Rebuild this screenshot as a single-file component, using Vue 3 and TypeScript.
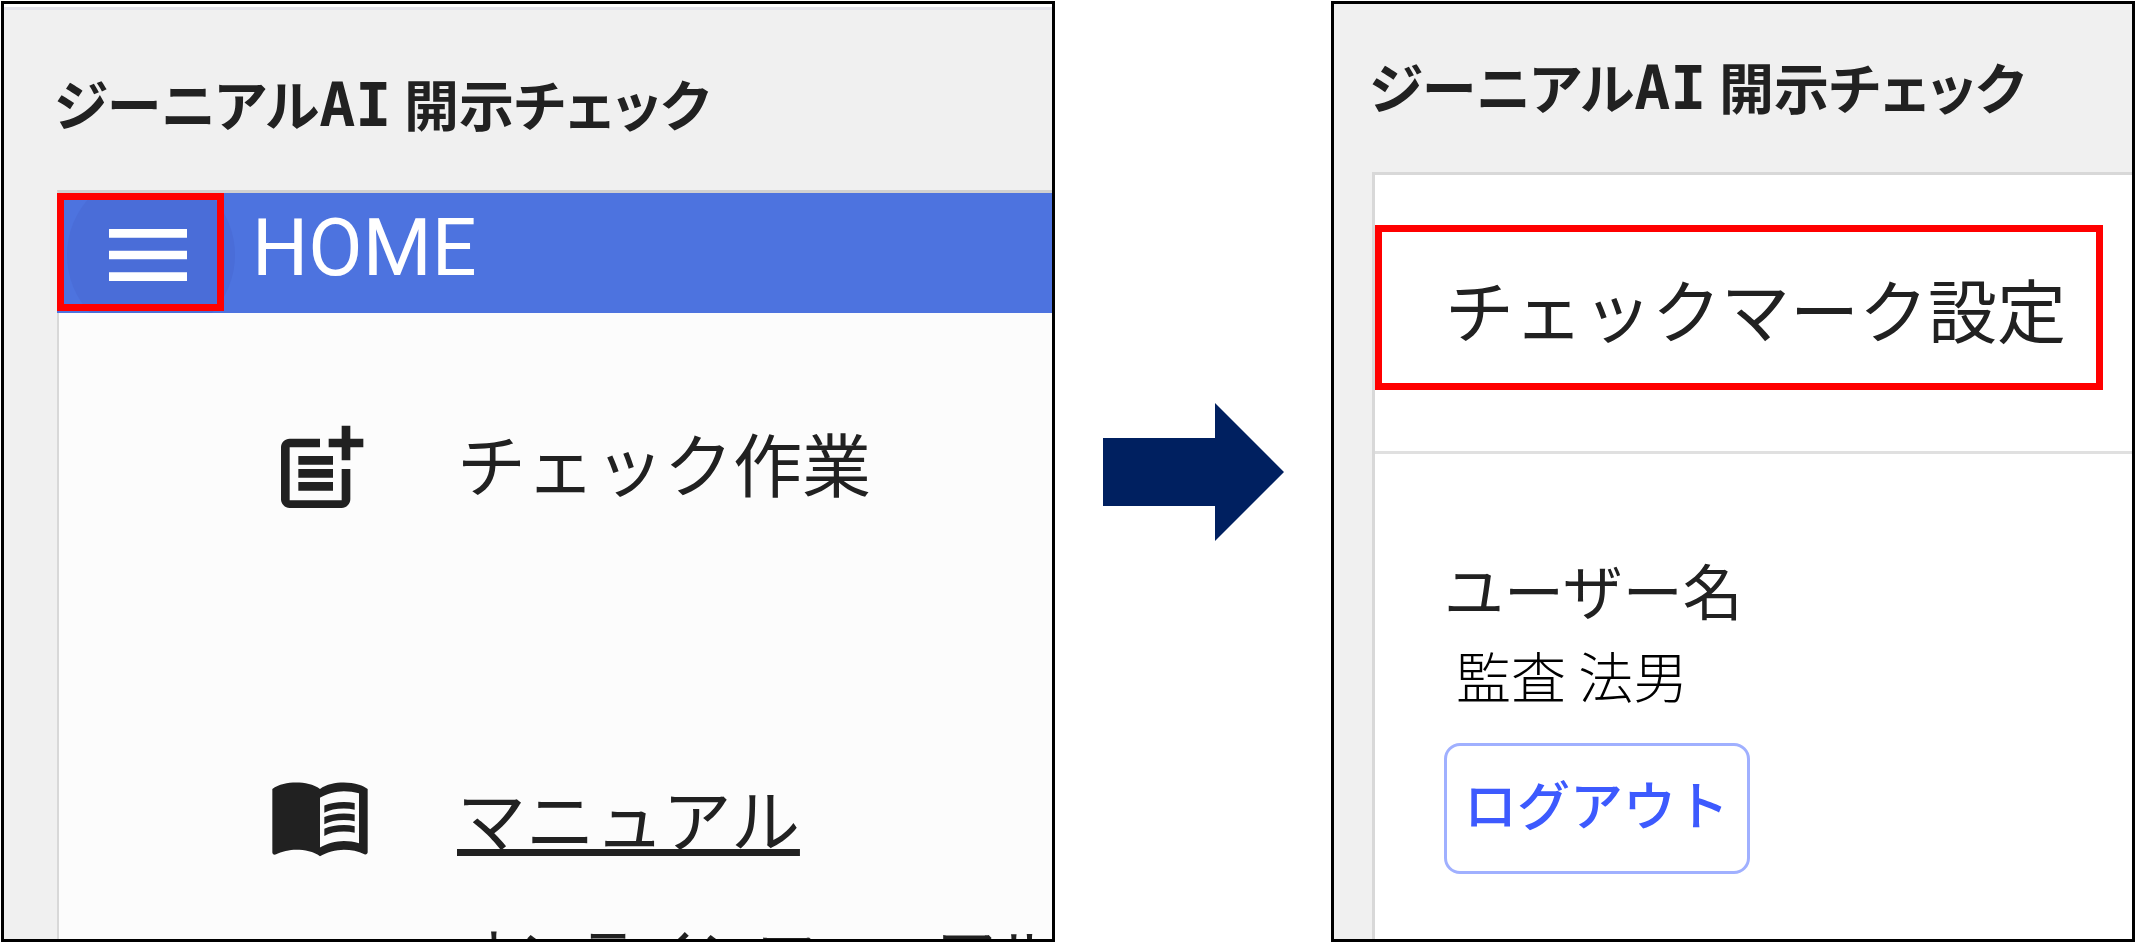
<script setup lang="ts">
const title = { brand: 'ジーニアル', ai: 'AI', product: ' 開示チェック' }
const user = { label: 'ユーザー名', name: '監査 法男' }
</script>

<template>
  <main class="page">
    <section class="panel panel-home">
      <h1 class="title">{{ title.brand }}<span class="latin">{{ title.ai }}</span>{{ title.product }}</h1>
      <div class="card card-home">
        <header class="bar">
          <button class="menu" type="button" aria-label="メニュー">
            <svg class="menu-icon" viewBox="0 0 24 24" aria-hidden="true">
              <path fill="currentColor" d="M3 18h18v-2H3v2zm0-5h18v-2H3v2zm0-7v2h18V6H3z" />
            </svg>
          </button>
          <h2 class="bar-title">HOME</h2>
        </header>
        <ul class="items">
          <li class="item">
            <svg class="icon" viewBox="0 0 24 24" aria-hidden="true">
              <path fill="currentColor" d="M17 19.22H5V7h7V5H5c-1.1 0-2 .9-2 2v12c0 1.1.9 2 2 2h12c1.1 0 2-.9 2-2v-7h-2v7.22z" />
              <path fill="currentColor" d="M19 2h-2v3h-3v2h3v3h2V7h3V5h-3V2zM7 9h8v2H7zM7 12v2h8v-2H7zM7 15h8v2H7z" />
            </svg>
            <span class="item-text">チェック作業</span>
          </li>
          <li class="item item-manual">
            <svg class="icon" viewBox="0 0 24 24" aria-hidden="true">
              <path fill="currentColor" d="M21 5c-1.11-.35-2.33-.5-3.5-.5-1.95 0-4.05.4-5.5 1.5-1.45-1.1-3.55-1.5-5.5-1.5S2.45 4.9 1 6v14.65c0 .25.25.5.5.5.1 0 .15-.05.25-.05C3.1 20.45 5.05 20 6.5 20c1.95 0 4.05.4 5.5 1.5 1.35-.85 3.8-1.5 5.5-1.5 1.65 0 3.35.3 4.75 1.05.1.05.15.05.25.05.25 0 .5-.25.5-.5V6c-.6-.45-1.25-.75-2-1zm0 13.5c-1.1-.35-2.3-.5-3.5-.5-1.7 0-4.15.65-5.5 1.5V8c1.35-.85 3.8-1.5 5.5-1.5 1.2 0 2.4.15 3.5.5v11.5z" />
              <path fill="currentColor" d="M17.5 10.5c.88 0 1.73.09 2.5.26V9.24c-.79-.15-1.64-.24-2.5-.24-1.7 0-3.24.29-4.5.83v1.66c1.13-.64 2.7-.99 4.5-.99zM13 12.49v1.66c1.13-.64 2.7-.99 4.5-.99.88 0 1.73.09 2.5.26V11.9c-.79-.15-1.64-.24-2.5-.24-1.7 0-3.24.3-4.5.83zM17.5 14.33c-1.7 0-3.24.29-4.5.83v1.66c1.13-.64 2.7-.99 4.5-.99.88 0 1.73.09 2.5.26v-1.52c-.79-.16-1.64-.24-2.5-.24z" />
            </svg>
            <div>
              <a class="item-text link" href="#manual">マニュアル</a>
              <p class="note">オンラインマニュアル</p>
            </div>
          </li>
        </ul>
      </div>
    </section>

    <div class="between">
      <svg class="arrow" viewBox="0 0 181 138" aria-hidden="true">
        <path fill="#002060" d="M0 35h112V0l69 69-69 69v-35H0z" />
      </svg>
    </div>

    <section class="panel panel-settings">
      <h1 class="title">{{ title.brand }}<span class="latin">{{ title.ai }}</span>{{ title.product }}</h1>
      <div class="card card-settings">
        <div class="setting">
          <button class="setting-button" type="button">チェックマーク設定</button>
        </div>
        <div class="account">
          <p class="user-label">{{ user.label }}</p>
          <p class="user-name">{{ user.name }}</p>
          <button class="logout" type="button">ログアウト</button>
        </div>
      </div>
    </section>
  </main>
</template>

<style>
body {
  margin: 0;
  background: #fff;
}
</style>

<style scoped>
* {
  box-sizing: border-box;
}

h1,
h2,
p,
ul {
  margin: 0;
  padding: 0;
}

button {
  font-family: inherit;
  cursor: pointer;
}

.page {
  display: grid;
  grid-template-columns: 1054fr 276fr 804fr;
  grid-template-rows: 100%;
  height: 100vh;
  padding: 1px 0 1px 1px;
  overflow: hidden;
  color: #212121;
  font-family: "Noto Sans CJK JP", sans-serif;
}

.panel {
  display: flex;
  flex-direction: column;
  min-width: 0;
  overflow: hidden;
  border: 3px solid #000;
  background: #f0f0f0;
}

.panel-home {
  padding: 52px 0 0 53px;
  box-shadow: inset 0 3px #fff, inset 0 6px #e6e6ee;
}

.panel-settings {
  padding: 35px 0 0 38px;
}

.title {
  margin-left: -3px;
  font-size: 55px;
  line-height: 92px;
  font-weight: 700;
  font-feature-settings: "palt";
  white-space: nowrap;
}

.latin {
  font-family: "DejaVu Sans Mono", monospace;
  font-size: 60px;
  line-height: 60px;
}

.card {
  flex: 1;
  min-height: 0;
  border-left: 3px solid #d8d8d8;
}

.card-home {
  margin-top: 42px;
  border-top: 3px solid #d0d0d0;
  border-left-width: 2px;
  background: #fcfcfc;
}

.card-settings {
  margin-top: 41px;
  border-top: 3px solid #d8d8d8;
  background: #fff;
}

.bar {
  display: flex;
  height: 120px;
  margin-left: -2px;
  overflow: hidden;
  isolation: isolate;
  background: #4d73df;
  color: #fff;
}

.menu {
  position: relative;
  display: flex;
  align-items: center;
  justify-content: center;
  width: 167px;
  height: 118px;
  padding: 6px 0 0 15px;
  border: 7px solid #f00;
  background: none;
  color: inherit;
}

.menu::before {
  content: "";
  position: absolute;
  top: -29px;
  left: 3px;
  width: 168px;
  height: 168px;
  border-radius: 50%;
  background: #4a6dd8;
  z-index: -1;
}

.menu-icon {
  flex: none;
  width: 104px;
  height: 104px;
}

.bar-title {
  padding-left: 28px;
  font-family: Roboto, sans-serif;
  font-size: 79px;
  line-height: 110px;
  font-weight: 400;
}

.items {
  padding: 104px 0 0 209px;
  list-style: none;
}

.item {
  display: flex;
  gap: 85px;
  min-height: 104px;
  line-height: 90px;
}

.item-manual {
  margin-top: 242px;
  line-height: 108px;
}

.icon {
  flex: none;
  width: 104px;
  height: 104px;
}

.item-text {
  font-size: 69px;
  white-space: nowrap;
}

.link {
  display: block;
  color: inherit;
  text-decoration: underline 7px;
  text-decoration-skip-ink: none;
  text-underline-offset: 2px;
}

.note {
  margin-top: 37px;
  font-size: 60px;
  line-height: 90px;
  white-space: nowrap;
}

.between {
  display: flex;
  align-items: center;
  justify-content: center;
}

.arrow {
  width: 181px;
  height: 138px;
}

.setting {
  padding: 50px 29px 61px 0;
  border-bottom: 3px solid #e0e0e0;
}

.setting-button {
  width: 100%;
  height: 165px;
  padding: 0 0 0 63px;
  border: 7px solid #f00;
  background: #fff;
  color: inherit;
  font-size: 69px;
  line-height: 140px;
  text-align: left;
  white-space: nowrap;
}

.account {
  padding: 90px 0 0 69px;
}

.user-label {
  font-size: 60px;
  line-height: 90px;
}

.user-name {
  padding-left: 12px;
  color: #000;
  font-size: 55px;
  line-height: 80px;
  font-weight: 300;
}

.logout {
  display: block;
  margin-top: 29px;
  padding: 0 18px 10px 17px;
  border: 3px solid #a0b0ff;
  border-radius: 16px;
  background: #fff;
  color: #3d5afe;
  font-size: 53px;
  line-height: 115px;
  font-weight: 500;
}
</style>
